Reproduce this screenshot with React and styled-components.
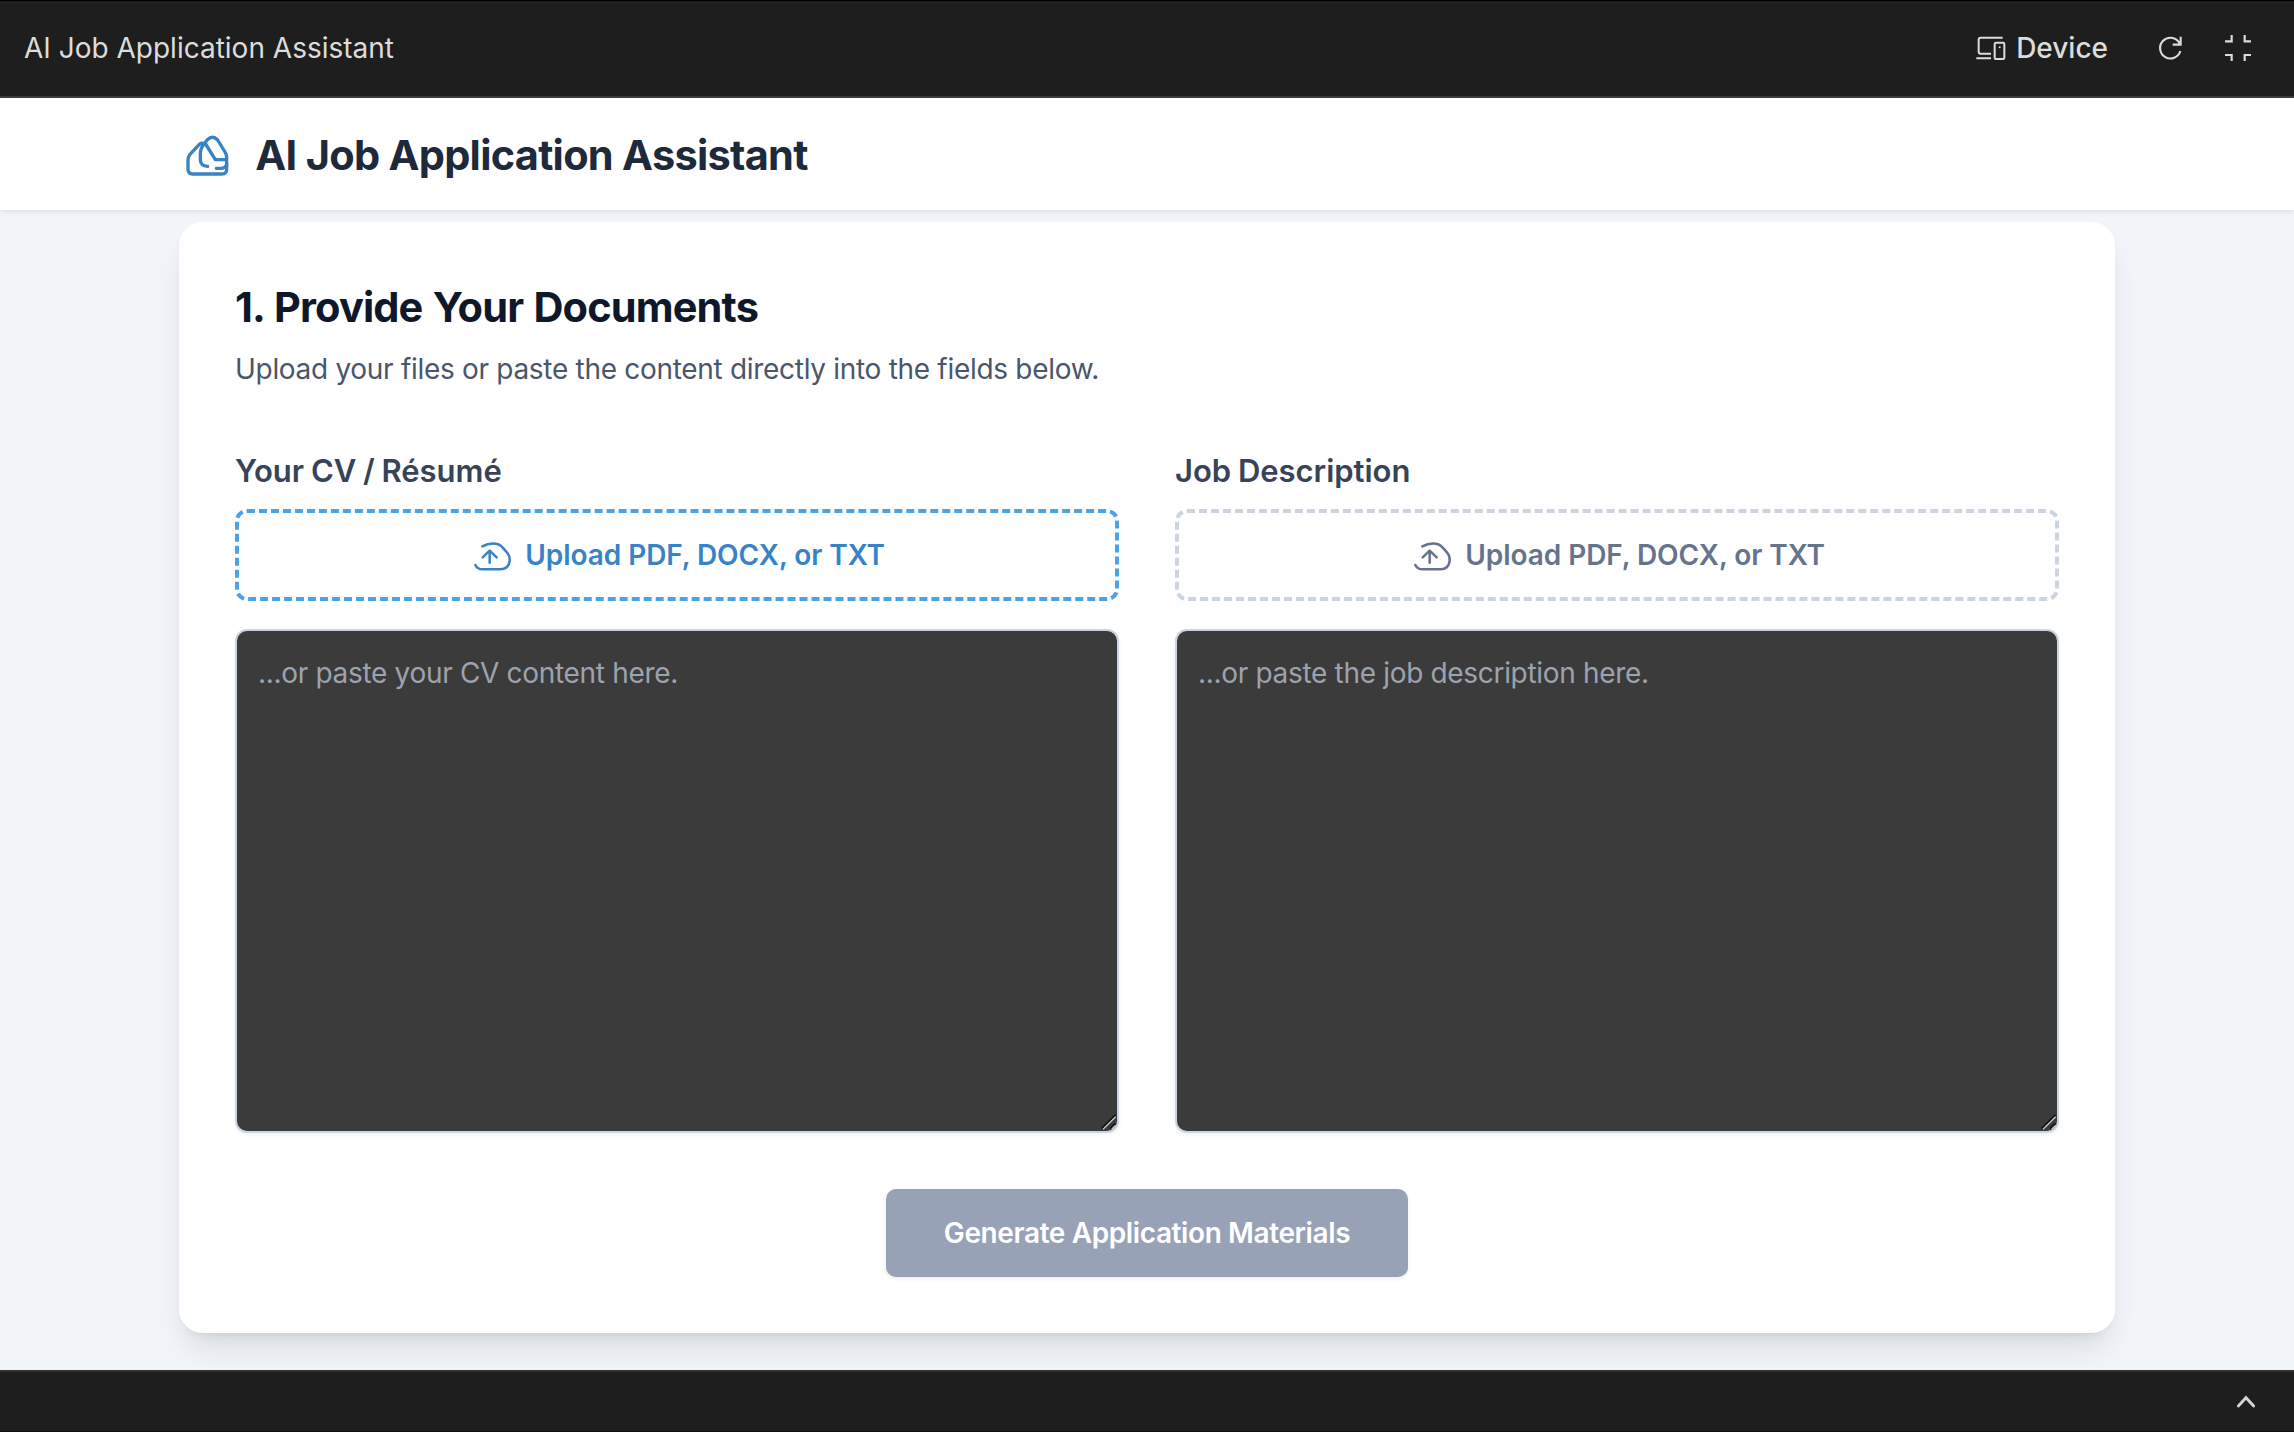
import React from "react";
import styled, { createGlobalStyle } from "styled-components";

const Global = createGlobalStyle`
  *, *::before, *::after { box-sizing: border-box; }
  body { margin: 0; background: #1e1e1e; }
  h1, h2, p { margin: 0; }
  svg { display: block; flex: none; fill: none; stroke: currentColor; }
`;

const Shell = styled.div`
  display: flex;
  flex-direction: column;
  width: 100%;
  height: 1432px;
  overflow: hidden;
  font-family: Inter, "Liberation Sans", sans-serif;
`;

const TopBar = styled.div`
  display: flex;
  align-items: center;
  justify-content: space-between;
  height: 98px;
  flex: none;
  padding: 0 42px 1px 24px;
  background: #1e1e1e;
  border-top: 1px solid #000;
  border-bottom: 2px solid #3c3c3c;
  color: #dcdcdc;
  font-size: 28px;
  line-height: 40px;
`;

const BarTitle = styled.span`
  letter-spacing: 0;
`;

const BarActions = styled.div`
  display: flex;
  align-items: center;
`;

const DeviceButton = styled.div`
  display: flex;
  align-items: center;
  gap: 9.5px;
  font-weight: 500;
  margin-right: 49px;
`;

const RefreshSlot = styled.div`
  margin-right: 39px;
`;

const Header = styled.header`
  position: relative;
  z-index: 1;
  flex: none;
  height: 112px;
  display: flex;
  align-items: center;
  padding: 0 179px;
  background: #fff;
  box-shadow: 0 2px 6px rgba(0, 0, 0, 0.07), 0 2px 4px -2px rgba(0, 0, 0, 0.05);
`;

const Logo = styled.div`
  color: #3883c6;
  margin: 3px 25.7px 0 6px;
`;

const AppTitle = styled.h1`
  margin-top: 2px;
  color: #1e293b;
  font-size: 41.5px;
  font-weight: 700;
  line-height: 56px;
  letter-spacing: -0.72px;
`;

const Main = styled.main`
  flex: 1;
  min-height: 0;
  padding: 12px 179px 0;
  background: #f1f5fa;
`;

const Card = styled.section`
  height: 1111px;
  padding: 56px;
  border-radius: 24px;
  background: #fff;
  display: flex;
  flex-direction: column;
  box-shadow: 0 20px 30px -6px rgba(0, 0, 0, 0.1), 0 8px 12px -8px rgba(0, 0, 0, 0.1);
`;

const SectionTitle = styled.h2`
  color: #0f172a;
  font-size: 41.5px;
  font-weight: 700;
  line-height: 58px;
  letter-spacing: -0.85px;
  word-spacing: 1.2px;
`;

const Lead = styled.p`
  margin-top: 11px;
  color: #4a566a;
  font-size: 28px;
  line-height: 44px;
  letter-spacing: -0.3px;
`;

const Columns = styled.div`
  display: grid;
  grid-template-columns: 1fr 1fr;
  gap: 56px;
  margin-top: 56px;
`;

const Field = styled.div`
  display: flex;
  flex-direction: column;
`;

const Label = styled.label`
  color: #374357;
  font-size: 31px;
  font-weight: 600;
  line-height: 48px;
  letter-spacing: -0.03px;
  word-spacing: -1px;
  margin-bottom: 14px;
`;

const Upload = styled.div`
  display: flex;
  align-items: center;
  justify-content: center;
  gap: 13px;
  height: 92px;
  padding-left: 4px;
  border: 4px dashed ${(p) => (p.$active ? "#4ba2e4" : "#cbd5e1")};
  border-radius: 12px;
  color: ${(p) => (p.$active ? "#3883c6" : "#66738c")};
  font-size: 28px;
  font-weight: 600;
  letter-spacing: -0.06px;
  svg { margin-top: 3px; }
`;

const Paste = styled.div`
  position: relative;
  display: flex;
  margin-top: 28px;
  height: 504px;
`;

const TextArea = styled.textarea`
  flex: 1;
  resize: none;
  outline: none;
  border: 2px solid #cbd5e1;
  border-radius: 12px;
  background: #3b3b3b;
  color: #fff;
  padding: 21px 21px;
  font: 400 28px/42px Inter, "Liberation Sans", sans-serif;
  letter-spacing: -0.32px;
  box-shadow: 0 2px 4px rgba(0, 0, 0, 0.05);
  &::placeholder { color: #9ca3af; opacity: 1; }
`;

const Grip = styled.div`
  position: absolute;
  right: 2px;
  bottom: 2px;
`;

const Submit = styled.button`
  align-self: center;
  width: 522px;
  height: 88px;
  margin-top: 56px;
  padding: 0;
  border: 0;
  border-radius: 10px;
  background: #98a2b6;
  color: #fff;
  font: 600 28px/40px Inter, "Liberation Sans", sans-serif;
  letter-spacing: -0.39px;
  box-shadow: 0 2px 4px rgba(0, 0, 0, 0.07);
`;

const BottomBar = styled.footer`
  flex: none;
  height: 62px;
  display: flex;
  align-items: center;
  justify-content: flex-end;
  padding-right: 37px;
  background: #1e1e1e;
  border-top: 2px solid #333;
  border-bottom: 1px solid #0c0c0c;
  color: #d4d4d4;
`;

const LogoIcon = () => (
  <svg width="44.67" height="43.33" viewBox="44 40 134 130" strokeWidth="10" strokeLinecap="round" strokeLinejoin="round">
    <path d="M101 69 Q94 66 87 71 L59 101 Q53 109 53 119 V147 Q54 160 67 160 H154 Q169 159 169 147 V110 Q169 101 164 94 L142 58 Q127 42 111 57 L104 67 L135 117 H169" />
    <path d="M104 67 Q90 82 90 99 V118 Q91 136 112 137" />
    <path d="M138 143 H153 Q166 143 169 132" />
  </svg>
);

const DeviceIcon = () => (
  <svg width="32" height="28" viewBox="104 102 96 84" strokeWidth="6">
    <path d="M187 113 H121 Q115 113 115 119 V155 Q115 161 121 161 H152 M108 175 H152" />
    <rect x="163" y="128" width="29" height="49" rx="4" />
    <circle cx="178" cy="142" r="3" fill="currentColor" stroke="none" />
  </svg>
);

const RefreshIcon = () => (
  <svg width="28" height="28" viewBox="650 102 84 84" strokeWidth="6.3">
    <path d="M720 153 A31 31 0 1 1 716 127 L720 132 M721 110 V134 H697" />
  </svg>
);

const CollapseIcon = () => (
  <svg width="28" height="28" viewBox="852 102 84 84" strokeWidth="6.5">
    <path d="M875 105 V124 H855 M914 105 V124 H933 M855 165 H875 V183 M933 165 H914 V183" />
  </svg>
);

const CloudIcon = () => (
  <svg width="39.33" height="31" viewBox="760 124 118 93" strokeWidth="7.5" strokeLinecap="round" strokeLinejoin="round">
    <path d="M788 140 Q806 130 828 132 Q843 134 852 147 L864 161 Q871 170 870 184 Q867 208 843 209 H789 Q773 209 767 196" />
    <path d="M810 189 V153 M789 173 L810 153 L831 173" />
  </svg>
);

const ChevronIcon = () => (
  <svg width="22" height="16" viewBox="765 282 66 48" strokeWidth="8.5" strokeLinecap="round">
    <path d="M775 318 L798 293 L821 318" />
  </svg>
);

const GripIcon = () => (
  <svg width="16" height="18" viewBox="122 70 48 54">
    <path d="M124 117 L165 76 M150 117 L165 102" stroke="#0a0a0a" strokeWidth="5" />
    <path d="M128 119 L166 81 M154 119 L166 107" stroke="#c9c9c9" strokeWidth="4" />
  </svg>
);

function DocumentField({ id, label, placeholder, active }) {
  return (
    <Field>
      <Label htmlFor={id}>{label}</Label>
      <Upload $active={active}>
        <CloudIcon />
        <span>Upload PDF, DOCX, or TXT</span>
      </Upload>
      <Paste>
        <TextArea id={id} placeholder={placeholder} />
        <Grip><GripIcon /></Grip>
      </Paste>
    </Field>
  );
}

export default function App() {
  return (
    <Shell>
      <Global />
      <TopBar>
        <BarTitle>AI Job Application Assistant</BarTitle>
        <BarActions>
          <DeviceButton><DeviceIcon />Device</DeviceButton>
          <RefreshSlot><RefreshIcon /></RefreshSlot>
          <CollapseIcon />
        </BarActions>
      </TopBar>
      <Header>
        <Logo><LogoIcon /></Logo>
        <AppTitle>AI Job Application Assistant</AppTitle>
      </Header>
      <Main>
        <Card>
          <SectionTitle>1. Provide Your Documents</SectionTitle>
          <Lead>Upload your files or paste the content directly into the fields below.</Lead>
          <Columns>
            <DocumentField id="cv" label="Your CV / Résumé" placeholder="...or paste your CV content here." active />
            <DocumentField id="job" label="Job Description" placeholder="...or paste the job description here." />
          </Columns>
          <Submit>Generate Application Materials</Submit>
        </Card>
      </Main>
      <BottomBar><ChevronIcon /></BottomBar>
    </Shell>
  );
}
